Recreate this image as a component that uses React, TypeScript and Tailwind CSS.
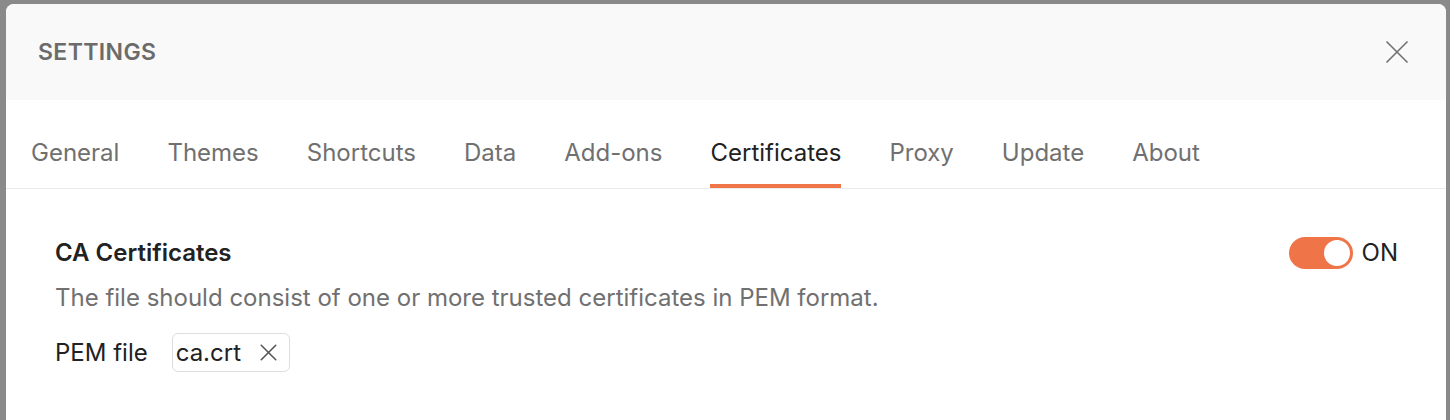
import { X } from "lucide-react";

const tabs = [
  "General",
  "Themes",
  "Shortcuts",
  "Data",
  "Add-ons",
  "Certificates",
  "Proxy",
  "Update",
  "About",
];

const App = () => {
  const active = "Certificates";

  return (
    <div className="w-full h-[420px] bg-[#8a8a8a] pt-[4px] pl-[6px] pr-[4px] overflow-hidden font-['Inter',sans-serif]">
      <div className="w-full h-[500px] bg-white rounded-t-[8px] overflow-hidden flex flex-col">
        {/* Header */}
        <div className="flex items-center justify-between h-[96px] bg-[#f9f9f9] pl-[32px] pr-[37px]">
          <h2 className="text-[23px] font-semibold tracking-[0.4px] text-[#6b6b6b]">SETTINGS</h2>
          <svg width="24" height="24" viewBox="0 0 24 24" className="text-[#707070]">
            <path d="M1.5 1.5 L22.5 22.5 M22.5 1.5 L1.5 22.5" stroke="currentColor" strokeWidth="1.6" fill="none" />
          </svg>
        </div>

        {/* Tabs */}
        <div className="flex h-[89px] border-b border-[#ebebeb] pt-[22px] pl-[1px]">
          {tabs.map((tab) => (
            <div key={tab} className="flex flex-col px-6">
              <span
                className={`h-[62px] flex items-center text-[24px] ${
                  tab === active ? "text-[#222222]" : "text-[#707070]"
                }`}
              >
                {tab}
              </span>
              <div className={`h-[4px] ${tab === active ? "bg-[#ef7549]" : "bg-transparent"}`} />
            </div>
          ))}
        </div>

        {/* Content */}
        <div className="flex flex-col pl-[49px] pr-[48px] pt-[48px]">
          <div className="flex items-center justify-between h-[32px]">
            <span className="text-[24px] leading-[30px] font-semibold text-[#222222]">CA Certificates</span>
            <div className="flex items-center gap-[9px]">
              <div className="w-[64px] h-[32px] rounded-full bg-[#ef7549] flex items-center justify-end pr-[3px]">
                <div className="w-[26px] h-[26px] rounded-full bg-white" />
              </div>
              <span className="text-[24px] leading-[30px] text-[#222222]">ON</span>
            </div>
          </div>
          <p className="mt-[14px] text-[24px] leading-[30px] text-[#707070]">
            The file should consist of one or more trusted certificates in PEM format.
          </p>
          <div className="flex items-center gap-[24px] mt-[20px] h-[39px]">
            <span className="text-[24px] leading-[30px] text-[#222222]">PEM file</span>
            <div className="flex items-center h-[39px] border border-[#dddddd] rounded-[6px] pl-[3px] pr-[6px] gap-[13px]">
              <span className="text-[24px] leading-[30px] text-[#222222]">ca.crt</span>
              <X className="w-[29px] h-[29px] text-[#555555]" strokeWidth={1.25} />
            </div>
          </div>
        </div>
      </div>
    </div>
  );
};

export default App;
